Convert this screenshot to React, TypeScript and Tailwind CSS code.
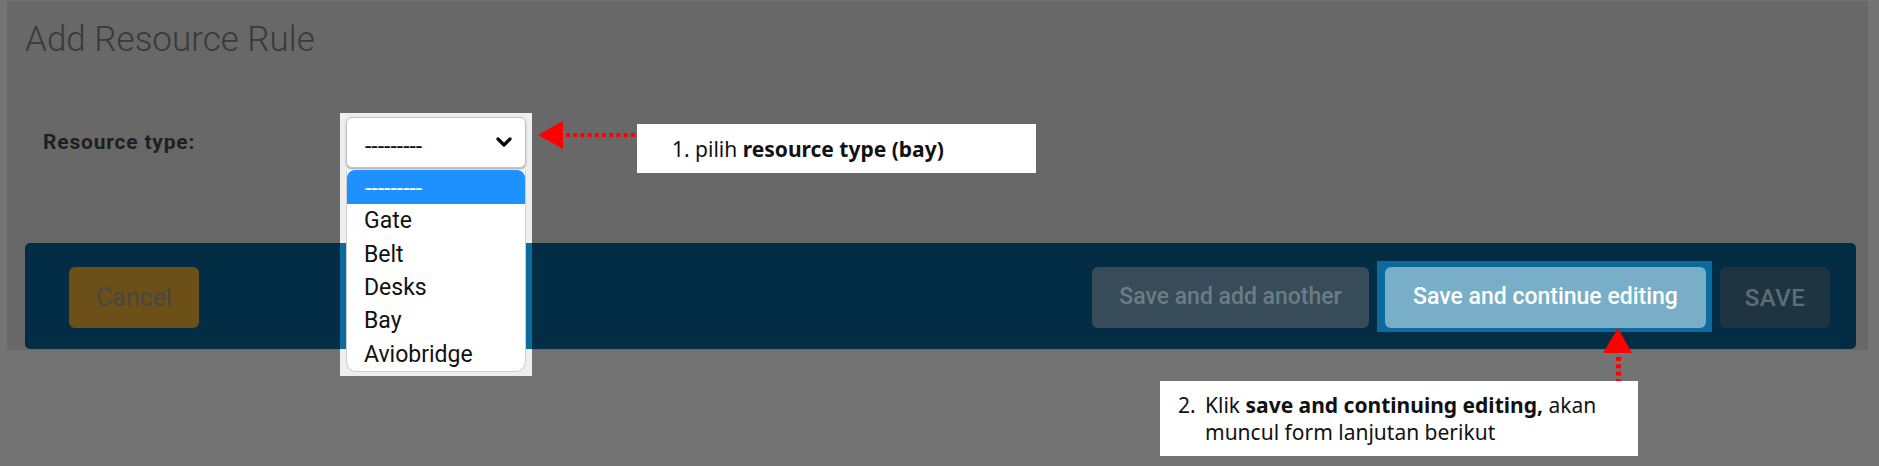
import React from "react";

const items = ["Gate", "Belt", "Desks", "Bay", "Aviobridge"];

function LeftArrow() {
  const dots = [];
  for (let x = 28; x < 99; x += 7.2) dots.push(x);
  return (
    <svg className="absolute left-[538px] top-[121px]" width="99" height="28" viewBox="0 0 99 28">
      <polygon points="0,14 25,0 25,28" fill="#ff0000" />
      {dots.map((x, i) => (
        <rect key={i} x={x} y={12} width={4} height={4} fill="#ff0000" />
      ))}
    </svg>
  );
}

function UpArrow() {
  const dots = [];
  for (let y = 29; y < 53; y += 7.3) dots.push(y);
  return (
    <svg className="absolute left-[1603px] top-[328px]" width="29" height="53" viewBox="0 0 29 53">
      <polygon points="15,0 0,25 29,25" fill="#ff0000" />
      {dots.map((y, i) => (
        <rect key={i} x={13} y={y} width={5} height={4} fill="#ff0000" />
      ))}
    </svg>
  );
}

export default function App() {
  return (
    <div className="relative w-[1879px] h-[466px] overflow-hidden bg-[#737373] font-['Roboto',sans-serif]">
      <div className="ml-[7px] mt-[1px] w-[1861px] h-[349px] bg-[#686868] flex flex-col">
        <h1 className="pl-[18px] pt-[19px] text-[35px] leading-[40px] font-light text-[#3a3a3a]">
          Add Resource Rule
        </h1>
        <div className="mt-[57px] h-[51px] flex items-start pl-[36px]">
          <div className="w-[303px] pt-[12px] text-[21px] leading-[26px] font-bold tracking-[0.8px] text-[#1f1f1f]">
            Resource type:
          </div>
          <div className="relative w-[180px] h-[51px]">
            {/* highlight frame */}
            <div className="absolute left-[-6px] top-[-4px] w-[192px] h-[263px] bg-[#eeeeee]">
              <div className="mt-[130px] h-[106px] bg-[#0b6b9c]" />
            </div>
            <div className="relative h-[51px] flex items-center justify-between pl-[18px] pr-[13px] bg-white border border-[#c4c4c4] rounded-[6px] shadow-[0_1px_2px_rgba(0,0,0,0.3)]">
              <span className="pt-[7px] text-[23px] leading-[27px] text-[#111]">---------</span>
              <svg width="16" height="11" viewBox="0 0 16 11">
                <polyline points="2,2 8,8 14,2" fill="none" stroke="#000" strokeWidth="3.2" strokeLinecap="round" strokeLinejoin="round" />
              </svg>
            </div>
            <div className="absolute left-0 top-[53px] w-[180px] h-[202px] bg-white border-x border-b border-[#cfcfcf] rounded-b-[10px] flex flex-col">
              <div className="h-[34px] bg-[#1e90ff] rounded-t-[8px] pl-[18px] flex items-center pt-[4px] text-[23px] leading-[27px] text-white">
                ---------
              </div>
              {items.map((it) => (
                <div key={it} className="h-[33.5px] pl-[17px] flex items-center text-[23px] leading-[27px] text-[#111]">
                  {it}
                </div>
              ))}
            </div>
          </div>
        </div>
        <div className="mt-[22px] ml-[18px] mr-[12px] h-px bg-[#6c6c6c]" />
        <div className="mt-[52px] ml-[18px] mr-[12px] h-[106px] rounded-[5px] bg-[#022d45] flex items-start justify-between pt-[24px] pl-[44px] pr-[26px]">
          <button className="w-[130px] h-[61px] rounded-[6px] bg-[#6d5017] text-[25px] text-[#474747]">
            Cancel
          </button>
          <div className="flex items-start">
            <button className="w-[277px] h-[61px] rounded-[6px] bg-[#374b58] text-[23px] font-medium text-[#6c7c86]">
              Save and add another
            </button>
            <div className="relative ml-[16px]">
              <div className="absolute left-[-8px] right-[-6px] top-[-6px] bottom-[-4px] bg-[#0b6b9c]" />
              <button className="relative w-[321px] h-[61px] rounded-[6px] bg-[#79aec8] text-[23px] font-medium text-white">
                Save and continue editing
              </button>
            </div>
            <button className="ml-[14px] w-[110px] h-[61px] rounded-[6px] bg-[#1f3441] text-[24px] font-medium tracking-[0.5px] text-[#5d6d77]">
              SAVE
            </button>
          </div>
        </div>
      </div>

      <LeftArrow />
      <div className="absolute left-[637px] top-[124px] w-[399px] h-[49px] bg-white flex items-center pl-[35px] font-['Noto_Sans',sans-serif] text-[21px] leading-[26px] text-[#111]">
        <span>
          1. pilih <b className="font-bold">resource type (bay)</b>
        </span>
      </div>

      <UpArrow />
      <div className="absolute left-[1160px] top-[381px] w-[478px] h-[75px] bg-white flex pl-[18px] pt-[11px] font-['Noto_Sans',sans-serif] text-[21px] leading-[27px] text-[#111]">
        <span className="w-[27px] shrink-0">2.</span>
        <span>
          Klik <b className="font-bold">save and continuing editing,</b> akan
          <br />
          muncul form lanjutan berikut
        </span>
      </div>
    </div>
  );
}
